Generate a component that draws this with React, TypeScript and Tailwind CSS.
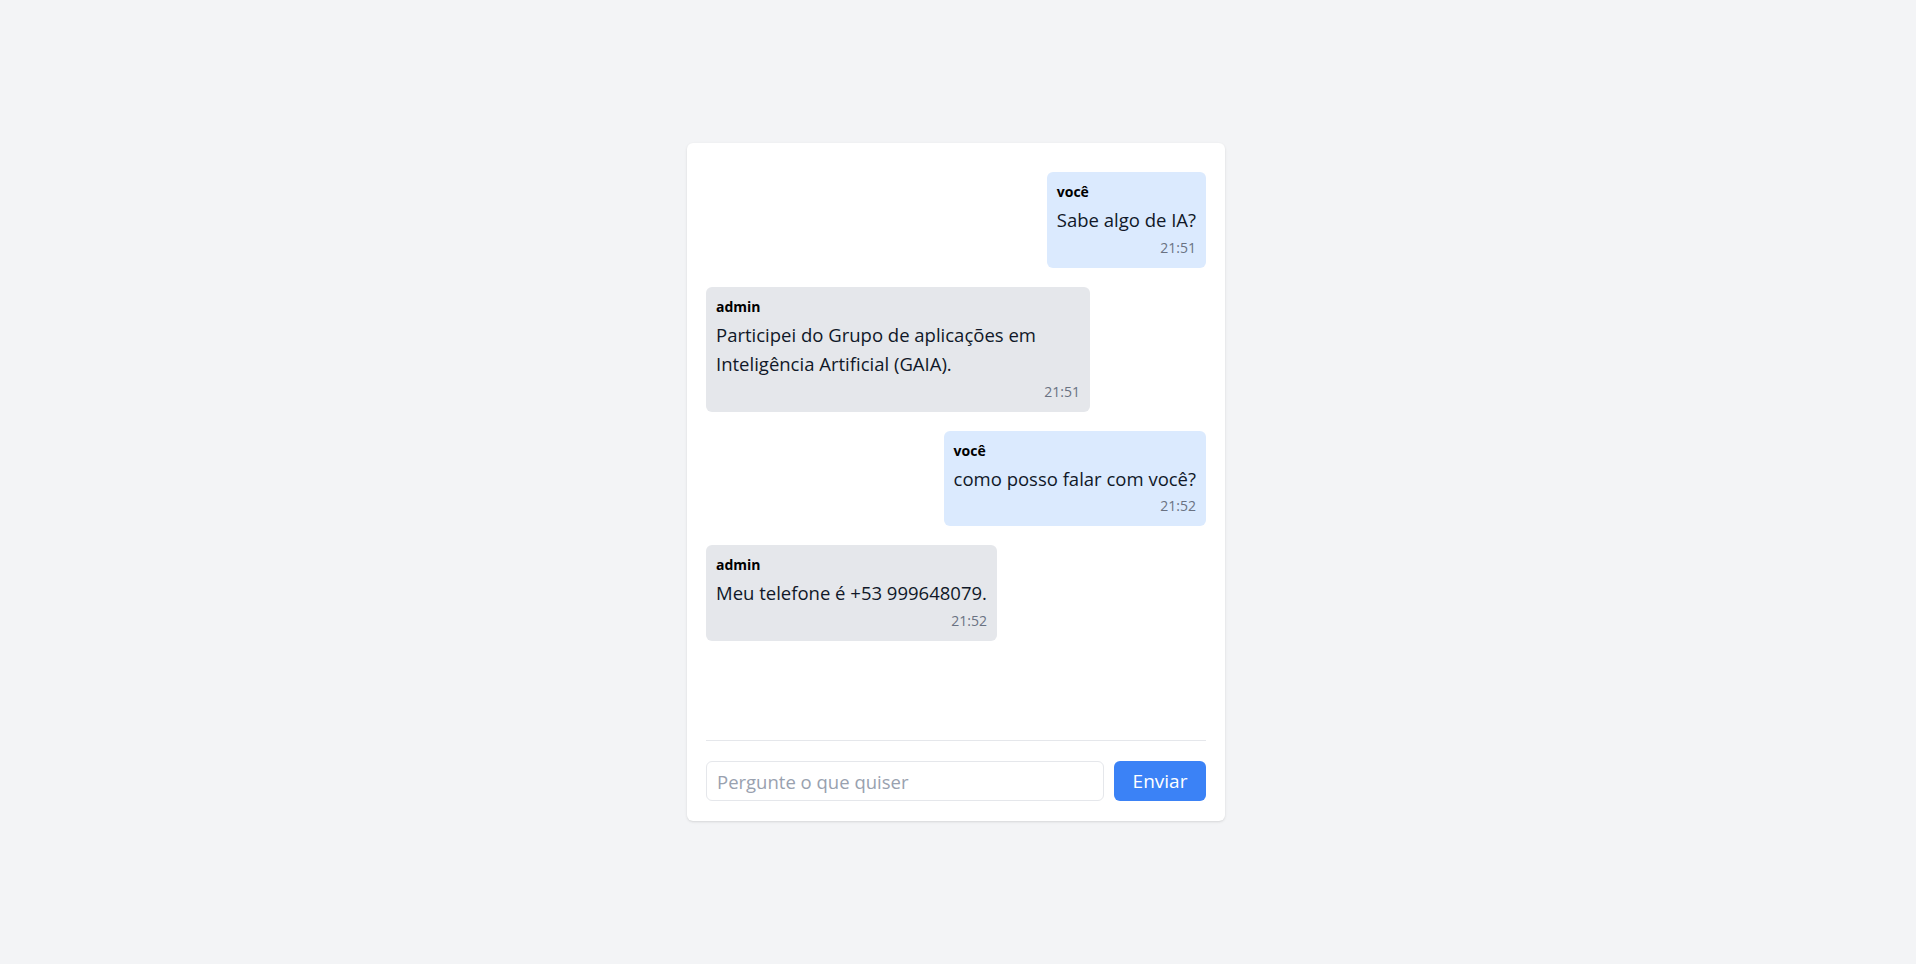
const messages = [
  { from: "você", text: "Sabe algo de IA?", time: "21:51", mine: true },
  {
    from: "admin",
    text: "Participei do Grupo de aplicações em Inteligência Artificial (GAIA).",
    time: "21:51",
    mine: false,
  },
  { from: "você", text: "como posso falar com você?", time: "21:52", mine: true },
  { from: "admin", text: "Meu telefone é +53 999648079.", time: "21:52", mine: false },
];

export default function App() {
  return (
    <div className="min-h-screen bg-gray-100 flex items-center justify-center font-['Open_Sans',sans-serif]">
      <div className="mr-1 w-[538px] h-[678px] bg-white rounded-md shadow flex flex-col px-[19px] pt-5 pb-5">
        {/* Messages */}
        <div className="flex-1 flex flex-col gap-[19px] pt-[9px] overflow-y-auto">
          {messages.map((m, i) => (
            <div
              key={i}
              className={`max-w-sm rounded-md p-2.5 ${
                m.mine ? "self-end bg-blue-100" : "self-start bg-gray-200"
              }`}
            >
              <p className="text-sm leading-5 font-bold text-black">{m.from}</p>
              <p className="mt-[3px] text-[18.5px] leading-[29.5px] text-gray-900">{m.text}</p>
              <p className="mt-[3px] text-right text-sm leading-5 text-gray-500">{m.time}</p>
            </div>
          ))}
        </div>

        {/* Input */}
        <form
          className="border-t border-gray-200 pt-5 flex gap-2.5"
          onSubmit={(e) => e.preventDefault()}
        >
          <input
            type="text"
            placeholder="Pergunte o que quiser"
            className="flex-1 h-10 border border-gray-200 rounded-md px-2.5 text-[18.5px] placeholder:text-gray-400 outline-none"
          />
          <button
            type="submit"
            className="h-10 w-[92px] bg-[#3b82f6] text-white rounded-md text-[19px]"
          >
            Enviar
          </button>
        </form>
      </div>
    </div>
  );
}
